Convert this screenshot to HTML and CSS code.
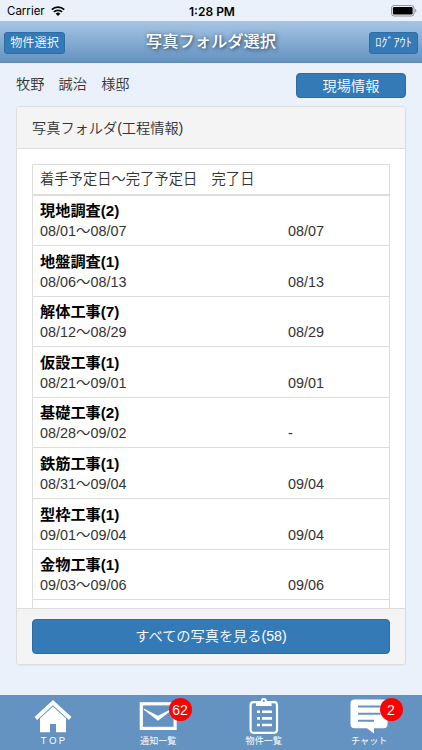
FILE: index.html
```html
<!DOCTYPE html>
<html lang="ja">
<head>
  <meta charset="UTF-8">
  <meta name="viewport" content="width=device-width, initial-scale=1.0">
  <title>写真フォルダ選択</title>
  <link rel="stylesheet" href="styles.css">
</head>
<body>
  <div class="status-bar">
    <div class="carrier">
      <span>Carrier</span>
      <svg class="wifi" viewBox="0 0 14 10" width="14" height="10">
        <path d="M0.8 3.6a9 9 0 0 1 12.4 0M2.9 5.9a6 6 0 0 1 8.2 0" fill="none" stroke="#000" stroke-width="1.8"/>
        <path d="M7 10L4.7 7.7a3.3 3.3 0 0 1 4.6 0z"/>
      </svg>
    </div>
    <div class="time">1:28 PM</div>
    <div class="battery">
      <svg viewBox="0 0 26 12" width="26" height="12">
        <rect x="0.5" y="0.5" width="22.5" height="10.5" rx="2.6" fill="none" stroke="#8e9299"/>
        <rect x="1.9" y="1.9" width="19.7" height="7.7" rx="1.3"/>
        <path d="M24.2 3.8c1.6 0.5 1.6 3.3 0 3.8z" fill="#8e9299"/>
      </svg>
    </div>
  </div>

  <header class="header">
    <button class="btn btn-header">物件選択</button>
    <h1>写真フォルダ選択</h1>
    <button class="btn btn-header btn-logout">ﾛｸﾞｱｳﾄ</button>
  </header>

  <main class="content">
    <div class="customer">
      <span>牧野　誠治　様邸</span>
      <button class="btn btn-site">現場情報</button>
    </div>

    <section class="panel">
      <div class="panel-heading">写真フォルダ(工程情報)</div>
      <div class="panel-body">
        <div class="folder-list">
          <div class="folder-head">着手予定日〜完了予定日　完了日</div>
          <div class="folder"><b>現地調査(2)</b><span>08/01〜08/07</span><span>08/07</span></div>
          <div class="folder"><b>地盤調査(1)</b><span>08/06〜08/13</span><span>08/13</span></div>
          <div class="folder"><b>解体工事(7)</b><span>08/12〜08/29</span><span>08/29</span></div>
          <div class="folder"><b>仮設工事(1)</b><span>08/21〜09/01</span><span>09/01</span></div>
          <div class="folder"><b>基礎工事(2)</b><span>08/28〜09/02</span><span>-</span></div>
          <div class="folder"><b>鉄筋工事(1)</b><span>08/31〜09/04</span><span>09/04</span></div>
          <div class="folder"><b>型枠工事(1)</b><span>09/01〜09/04</span><span>09/04</span></div>
          <div class="folder"><b>金物工事(1)</b><span>09/03〜09/06</span><span>09/06</span></div>
          <div class="folder"></div>
        </div>
      </div>
      <div class="panel-footer">
        <button class="btn btn-all">すべての写真を見る(58)</button>
      </div>
    </section>
  </main>

  <nav class="tab-bar">
    <a class="tab">
      <svg viewBox="0 0 38 36" width="38" height="36">
        <path d="M1.8 20.5L19 4.6l17.2 15.9" fill="none" stroke="#fff" stroke-width="3.8"/>
        <path d="M19 8.6L6 20.6V34.3h10V26h6v8.3h10V20.6z" fill="#fff"/>
      </svg>
      <span class="tab-label">ＴＯＰ</span>
    </a>
    <a class="tab">
      <svg viewBox="0 0 38 36" width="38" height="36">
        <rect x="2.3" y="5.8" width="33.8" height="24.6" fill="none" stroke="#fff" stroke-width="3.2"/>
        <path d="M4.8 10.4L19 17.8l14.2-7.4v1.4L19 22.8 4.8 11.8z" fill="#fff"/>
      </svg>
      <span class="tab-label">通知一覧</span>
      <span class="badge">62</span>
    </a>
    <a class="tab">
      <svg viewBox="0 0 38 36" width="38" height="36">
        <rect x="5.6" y="4.2" width="26.4" height="30.6" rx="3" fill="none" stroke="#fff" stroke-width="2.2"/>
        <path d="M11 8V6.3q0-2.6 3.2-3.2h1.6a3 3 0 0 1 6 0h1.6q3.2.6 3.2 3.2V8z" fill="#fff"/>
        <circle cx="18.8" cy="2.9" r="1" fill="#6492c1"/>
        <path d="M12 13.8h3M12 20.4h3M12 27h3M17 13.8h10M17 20.4h10M17 27h10" stroke="#fff" stroke-width="2.6"/>
      </svg>
      <span class="tab-label">物件一覧</span>
    </a>
    <a class="tab">
      <svg viewBox="0 0 38 36" width="38" height="36">
        <path d="M4.5 1.4h29a4 4 0 0 1 4 4v20.8a4 4 0 0 1-4 4H24v5.4l-7-5.4H4.5a4 4 0 0 1-4-4V5.4a4 4 0 0 1 4-4z" fill="#fff"/>
        <path d="M8 8.6h22.5M8 15.7h22.5M8 22.8h16" stroke="#6492c1" stroke-width="2"/>
      </svg>
      <span class="tab-label">チャット</span>
      <span class="badge">2</span>
    </a>
  </nav>
</body>
</html>
```

FILE: styles.css
```css
* {
  box-sizing: border-box;
}

body {
  margin: 0;
  height: 750px;
  display: flex;
  flex-direction: column;
  overflow: hidden;
  background-color: #eaf1fa;
  color: #333;
  font-family: "Liberation Sans", "Noto Sans CJK JP", sans-serif;
  font-size: 14.2px;
  font-weight: 350;
}

.status-bar {
  height: 21px;
  display: grid;
  grid-template-columns: 1fr auto 1fr;
  align-items: center;
  padding: 1px 5px 0 7px;
  color: #000;
  font-family: Inter, "Liberation Sans", sans-serif;
  font-size: 11.5px;
  font-weight: 400;
}

.carrier {
  display: flex;
  align-items: center;
  gap: 6px;
}

.time {
  font-size: 12px;
  font-weight: 600;
}

.battery {
  display: flex;
  justify-content: flex-end;
}

.header {
  height: 42px;
  display: grid;
  grid-template-columns: 62px 1fr 62px;
  align-items: center;
  padding: 2px 4px 0;
  background: linear-gradient(#a6c5e3, #6492c1);
  border-bottom: 1px solid #6089b6;
}

.header h1 {
  margin: 0;
  padding-bottom: 5px;
  text-align: center;
  color: #fff;
  font-size: 16.3px;
  font-weight: 500;
  text-shadow: 1px 1px 4px #234;
}

.btn {
  display: block;
  padding: 0;
  border: 1px solid #2e6da4;
  border-radius: 4px;
  background-color: #337ab7;
  color: #fff;
  font-family: inherit;
  font-size: 14.2px;
  font-weight: 350;
  white-space: nowrap;
}

.btn-header {
  width: 61px;
  height: 22px;
  border-radius: 3px;
  font-size: 12.2px;
  line-height: 21px;
}

.btn-logout {
  width: 49px;
  justify-self: end;
}

.content {
  flex: 1;
  padding: 10px 16px 0;
}

.customer {
  height: 33px;
  display: flex;
  justify-content: space-between;
}

.customer span {
  line-height: 23px;
}

.btn-site {
  width: 110px;
  height: 25px;
  line-height: 22px;
}

.panel {
  height: 559px;
  display: flex;
  flex-direction: column;
  border: 1px solid #ddd;
  border-radius: 4px;
  overflow: hidden;
  background-color: #fff;
  box-shadow: 0 1px 1px rgba(0, 0, 0, 0.05);
}

.panel-heading {
  height: 42px;
  padding-left: 15px;
  line-height: 42px;
  background-color: #f4f4f4;
  border-bottom: 1px solid #ddd;
}

.panel-body {
  flex: 1;
  min-height: 0;
  padding: 15px 15px 0;
  overflow: hidden;
}

.folder-list {
  border: 1px solid #ddd;
}

.folder-head {
  height: 30.5px;
  padding-left: 7px;
  font-size: 14.3px;
  line-height: 29px;
  border-bottom: 2px solid #ddd;
}

.folder {
  height: 50.6px;
  display: grid;
  grid-template-columns: 248px 1fr;
  grid-template-rows: 21px 21px;
  align-items: center;
  padding: 4.5px 7px 3.5px;
  border-bottom: 1px solid #ddd;
}

.folder b {
  grid-column: 1 / 3;
  color: #000;
  font-size: 15.2px;
  font-weight: 700;
  line-height: 21px;
}

.folder span {
  font-size: 14.4px;
  line-height: 21px;
}

.panel-footer {
  height: 56px;
  padding: 10px 15px;
  background-color: #f4f4f4;
  border-top: 1px solid #ddd;
}

.btn-all {
  width: 100%;
  height: 35px;
  line-height: 33px;
}

.tab-bar {
  height: 55px;
  display: grid;
  grid-template-columns: repeat(4, 1fr);
  background-color: #6492c1;
}

.tab {
  position: relative;
  display: flex;
  flex-direction: column;
  align-items: center;
  padding-top: 3px;
  color: #fff;
}

.tab-label {
  padding-top: 1px;
  font-size: 9.1px;
  font-weight: 400;
  line-height: 13px;
}

.badge {
  position: absolute;
  top: 3px;
  left: 63px;
  width: 23px;
  height: 23px;
  border-radius: 50%;
  background-color: #f00;
  font-size: 14px;
  line-height: 24px;
  text-align: center;
}
```
